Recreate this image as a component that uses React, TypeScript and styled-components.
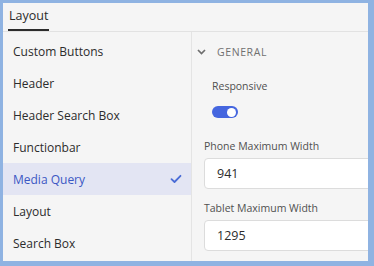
import { createGlobalStyle } from "styled-components";
import styled from "styled-components";

const GlobalStyle = createGlobalStyle`
  html, body {
    margin: 0;
    padding: 0;
    background: #8fb3e2;
  }
  * {
    box-sizing: border-box;
  }
`;

const items = [
  "Custom Buttons",
  "Header",
  "Header Search Box",
  "Functionbar",
  "Media Query",
  "Layout",
  "Search Box",
];

const App = () => {
  const selected = "Media Query";

  return (
    <>
      <GlobalStyle />
      <Frame>
        <TabBar>
          <Tab>Layout</Tab>
        </TabBar>
        <Body>
          <Sidebar>
            {items.map((name) => (
              <Item key={name} $active={name === selected}>
                {name}
                {name === selected && (
                  <svg width="12" height="10" viewBox="0 0 12 10">
                    <path
                      d="M1.5 5.2 L4.5 8 L10.5 1.8"
                      fill="none"
                      stroke="#4a6cd6"
                      strokeWidth="1.8"
                      strokeLinecap="round"
                      strokeLinejoin="round"
                    />
                  </svg>
                )}
              </Item>
            ))}
          </Sidebar>
          <Content>
            <SectionHeader>
              <svg width="9" height="6" viewBox="0 0 9 6">
                <path
                  d="M1 1 L4.5 4.5 L8 1"
                  fill="none"
                  stroke="#6e6e6e"
                  strokeWidth="1.7"
                />
              </svg>
              <SectionTitle>General</SectionTitle>
            </SectionHeader>
            <ToggleField>
              <Label>Responsive</Label>
              <Toggle $on>
                <Knob $on />
              </Toggle>
            </ToggleField>
            <Field>
              <Label>Phone Maximum Width</Label>
              <Input>941</Input>
            </Field>
            <Field>
              <Label>Tablet Maximum Width</Label>
              <Input>1295</Input>
            </Field>
          </Content>
        </Body>
      </Frame>
    </>
  );
};

export default App;

const Frame = styled.div`
  width: 374px;
  height: 266px;
  border-style: solid;
  border-color: #8fb3e2;
  border-width: 3px 6px 5px 3px;
  background: #f5f5f5;
  display: flex;
  flex-direction: column;
  overflow: hidden;
  font-family: "Open Sans", "Noto Sans", sans-serif;
  color: #2c2c2c;
`;

const TabBar = styled.div`
  height: 29px;
  border-bottom: 1px solid #e2e2e2;
  padding-left: 5px;
  display: flex;
  flex-shrink: 0;
`;

const Tab = styled.div`
  height: 28px;
  border-bottom: 2px solid #2c2c2c;
  padding: 4px 1px 0;
  font-size: 12.5px;
  line-height: 18px;
`;

const Body = styled.div`
  flex: 1;
  display: flex;
  min-height: 0;
`;

const Sidebar = styled.div`
  width: 189px;
  flex-shrink: 0;
  border-right: 1px solid #e4e4e4;
  padding-top: 3px;
`;

const Item = styled.div<{ $active?: boolean }>`
  height: 32px;
  display: flex;
  align-items: center;
  justify-content: space-between;
  padding: 0 9px 0 10px;
  font-size: 12px;
  color: ${(p) => (p.$active ? "#3b58c4" : "#2c2c2c")};
  background: ${(p) => (p.$active ? "#e3e5f3" : "transparent")};
`;

const Content = styled.div`
  flex: 1;
  min-width: 0;
  overflow: hidden;
  padding-top: 4px;
`;

const SectionHeader = styled.div`
  height: 32px;
  display: flex;
  align-items: center;
  gap: 11px;
  padding-left: 5px;
`;

const SectionTitle = styled.span`
  font-size: 10.5px;
  letter-spacing: 0.6px;
  text-transform: uppercase;
  color: #707070;
`;

const ToggleField = styled.div`
  padding: 11px 0 9px 20px;
  display: flex;
  flex-direction: column;
  gap: 12px;
`;

const Label = styled.div`
  font-size: 10.5px;
  line-height: 15px;
  color: #505050;
`;

const Toggle = styled.div<{ $on?: boolean }>`
  width: 26px;
  height: 12px;
  border-radius: 6px;
  background: ${(p) => (p.$on ? "#4566df" : "#bdbdbd")};
  position: relative;
`;

const Knob = styled.div<{ $on?: boolean }>`
  position: absolute;
  top: 1.5px;
  left: ${(p) => (p.$on ? "15px" : "2px")};
  width: 9px;
  height: 9px;
  border-radius: 50%;
  background: #ffffff;
`;

const Field = styled.div`
  padding: 12px 0 0 12px;
  display: flex;
  flex-direction: column;
  gap: 4px;
`;

const Input = styled.div`
  width: 220px;
  height: 31px;
  border: 1px solid #dcdcdc;
  border-radius: 4px;
  background: #ffffff;
  padding: 0 12px;
  display: flex;
  align-items: center;
  font-size: 12.5px;
  color: #2c2c2c;
`;
